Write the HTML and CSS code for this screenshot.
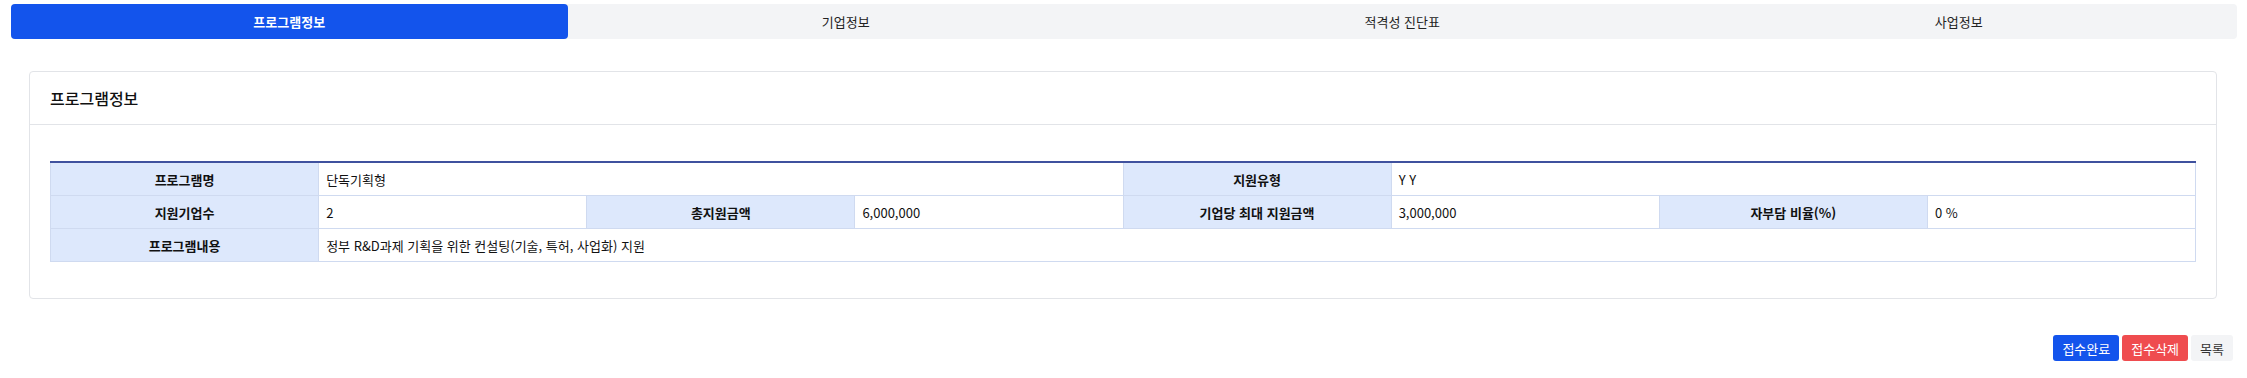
FILE: index.html
```html
<!DOCTYPE html>
<html lang="ko">
<head>
    <meta charset="UTF-8">
    <meta name="viewport" content="width=device-width, initial-scale=1.0">
    <title>프로그램정보</title>
    <link rel="stylesheet" href="styles.css">
</head>
<body>
    <div class="page">
        <nav class="tabs">
            <button type="button" class="tab active">프로그램정보</button>
            <button type="button" class="tab">기업정보</button>
            <button type="button" class="tab">적격성 진단표</button>
            <button type="button" class="tab">사업정보</button>
        </nav>

        <section class="card">
            <div class="card-header">
                <h2>프로그램정보</h2>
            </div>
            <div class="card-body">
                <table class="info-table">
                    <colgroup>
                        <col><col><col><col><col><col><col><col>
                    </colgroup>
                    <tbody>
                        <tr>
                            <th>프로그램명</th>
                            <td colspan="3">단독기획형</td>
                            <th>지원유형</th>
                            <td colspan="3">Y Y</td>
                        </tr>
                        <tr>
                            <th>지원기업수</th>
                            <td>2</td>
                            <th>총지원금액</th>
                            <td>6,000,000</td>
                            <th>기업당 최대 지원금액</th>
                            <td>3,000,000</td>
                            <th>자부담 비율(%)</th>
                            <td>0 %</td>
                        </tr>
                        <tr>
                            <th>프로그램내용</th>
                            <td colspan="7">정부 R&amp;D과제 기획을 위한 컨설팅(기술, 특허, 사업화) 지원</td>
                        </tr>
                    </tbody>
                </table>
            </div>
        </section>

        <div class="actions">
            <button type="button" class="btn btn-primary">접수완료</button>
            <button type="button" class="btn btn-danger">접수삭제</button>
            <button type="button" class="btn btn-light">목록</button>
        </div>
    </div>
</body>
</html>
```

FILE: styles.css
```css
body {
    margin: 0;
    padding: 0;
    background-color: #ffffff;
    color: #111111;
    font-family: "Noto Sans CJK KR", "Noto Sans", sans-serif;
}

.page {
    padding: 4px 10px 0 11px;
}

.tabs {
    display: grid;
    grid-template-columns: repeat(4, 1fr);
    background-color: #f3f4f6;
    border-radius: 4px;
}

.tab {
    height: 35px;
    border: none;
    border-radius: 4px;
    background: none;
    font-family: inherit;
    font-size: 13px;
    color: #222222;
    cursor: pointer;
}

.tab.active {
    background-color: #1354ec;
    color: #ffffff;
    font-weight: bold;
}

.card {
    margin: 32px 20px 0 18px;
    border: 1px solid #e2e4e8;
    border-radius: 4px;
}

.card-header {
    height: 52px;
    display: flex;
    align-items: center;
    padding: 0 20px;
    border-bottom: 1px solid #e2e4e8;
}

.card-header h2 {
    margin: 0;
    font-size: 16px;
    font-weight: 500;
}

.card-body {
    padding: 36px 20px 36px 20px;
}

.info-table {
    width: 100%;
    table-layout: fixed;
    border-collapse: collapse;
    border-top: 2px solid #3f519e;
    font-size: 13px;
}

.info-table th,
.info-table td {
    height: 32px;
    border: 1px solid #cfdaf0;
    padding: 0 7px;
    white-space: nowrap;
}

.info-table tr:first-child th,
.info-table tr:first-child td {
    border-top: none;
}

.info-table th {
    background-color: #dde8fc;
    text-align: center;
    font-weight: bold;
}

.info-table td {
    text-align: left;
}

.actions {
    display: flex;
    justify-content: flex-end;
    gap: 3px;
    margin-top: 36px;
    padding-right: 4px;
}

.btn {
    height: 26px;
    padding: 0 9px;
    border: none;
    border-radius: 3px;
    font-family: inherit;
    font-size: 13px;
    cursor: pointer;
}

.btn-primary {
    background-color: #1354ec;
    color: #ffffff;
}

.btn-danger {
    background-color: #ef4c4f;
    color: #ffffff;
}

.btn-light {
    background-color: #f3f4f6;
    color: #333333;
}
```
